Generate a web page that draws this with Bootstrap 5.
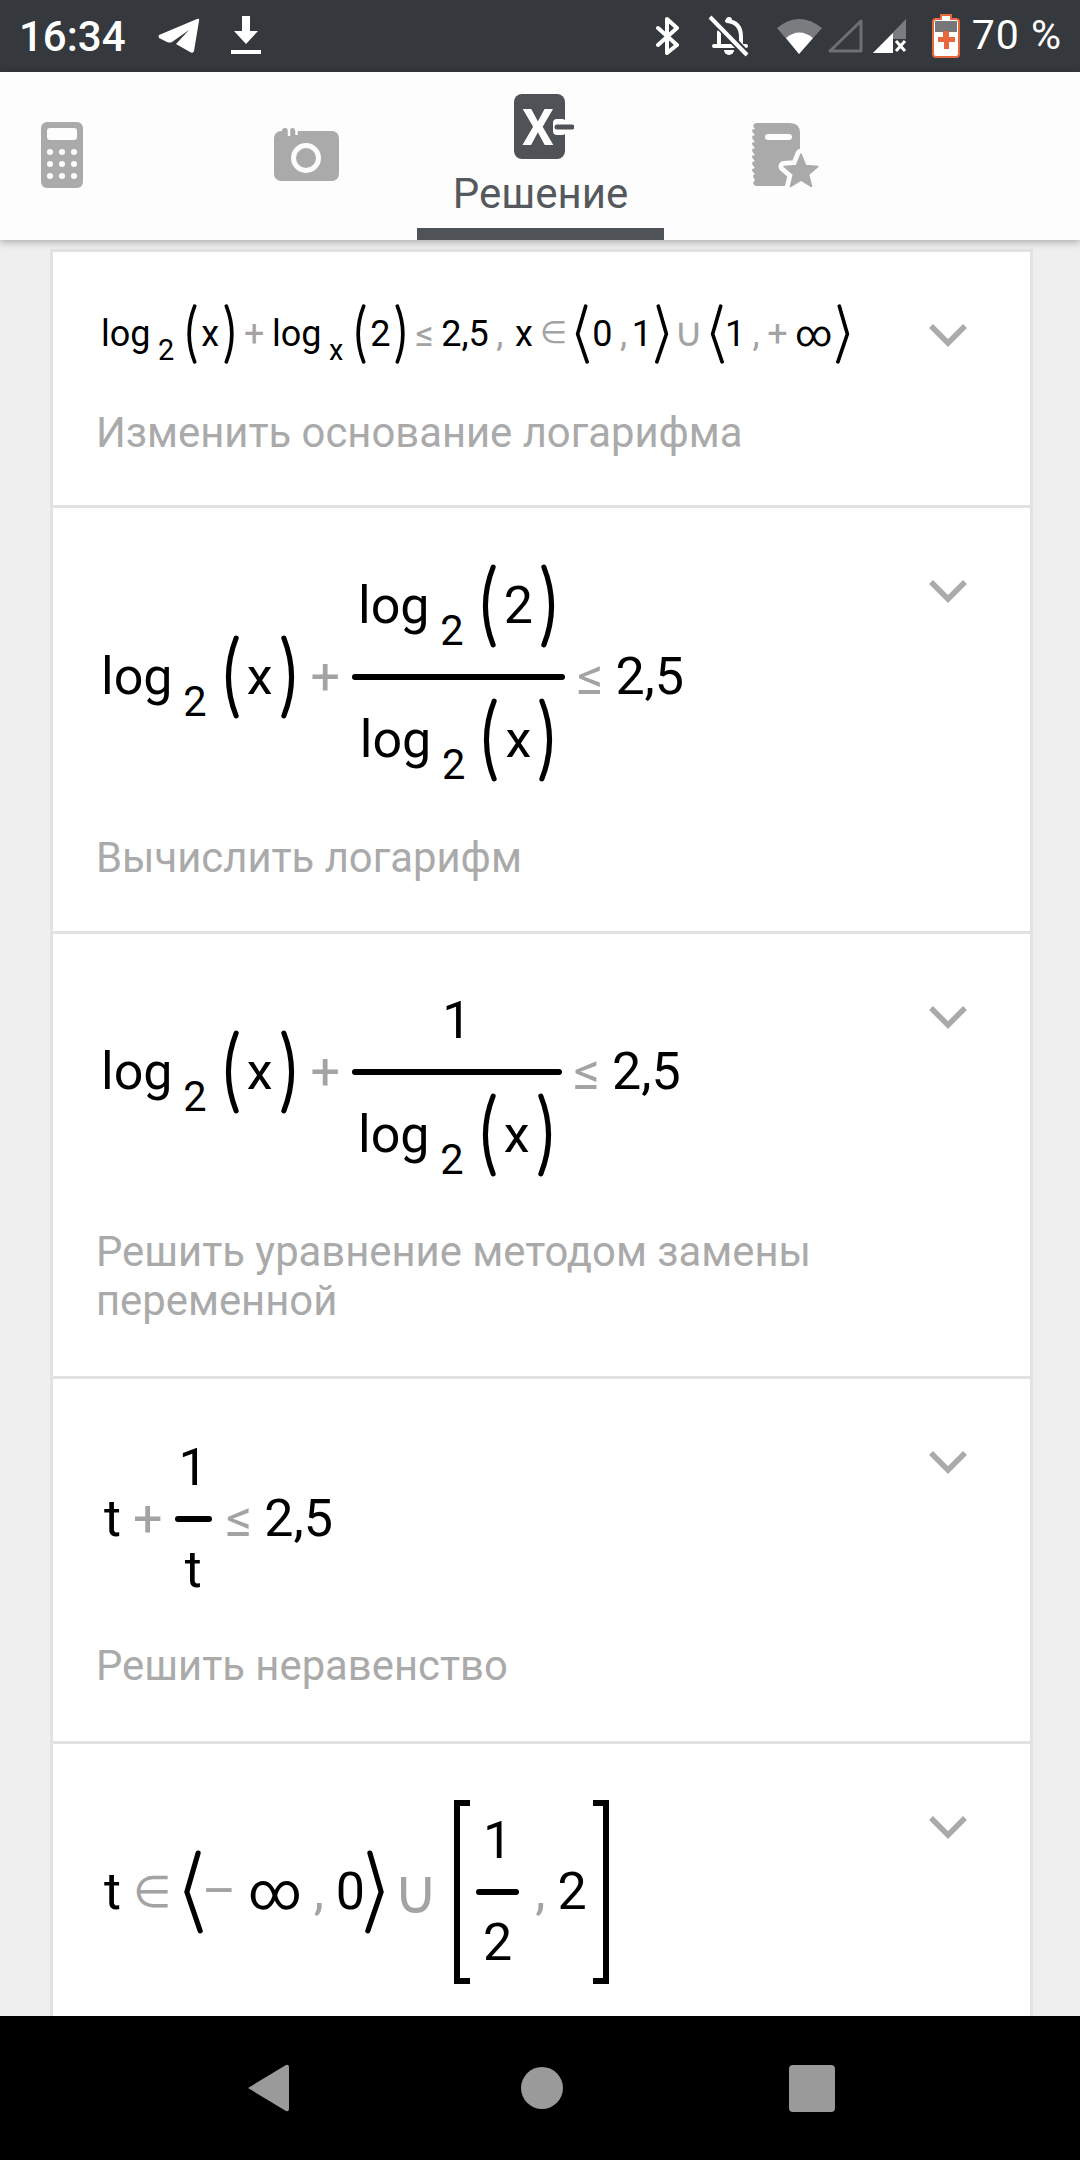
<!DOCTYPE html>
<html lang="ru">
<head>
    <meta charset="UTF-8">
    <title>Решение</title>
    <link href="https://cdn.jsdelivr.net/npm/bootstrap@5.3.0/dist/css/bootstrap.min.css" rel="stylesheet">
    <style>
        body {
            width: 1080px;
            height: 2160px;
            overflow: hidden;
            background-color: #efefef;
            font-family: Roboto, "Liberation Sans", sans-serif;
        }

        .status-bar {
            height: 72px;
            background-color: #35383c;
            color: #fff;
        }

        .status-time {
            font-size: 42px;
            font-weight: 500;
            margin-left: 19px;
            width: 139px;
        }

        .status-pct {
            font-size: 41px;
            margin-left: 12px;
            margin-right: 18px;
            letter-spacing: 1px;
        }

        .si-dl { margin-left: 31px; margin-right: auto; }
        .si-bell { margin-left: 27px; }
        .si-wifi { margin-left: 22px; }
        .si-sig1 { margin-left: 4px; }
        .si-sig2 { margin-left: 8px; }
        .si-batt { margin-left: 24px; }

        .tab-bar {
            height: 168px;
            background-color: #fdfdfd;
            box-shadow: 0 2px 8px rgba(0, 0, 0, .3);
            z-index: 2;
        }

        .tab-calc { margin: 50px 0 0 41px; }
        .tab-cam { margin: 56px 0 0 191px; }
        .tab-note { margin: 50px 0 0 86px; }

        .tab-active {
            width: 247px;
            margin-left: 78px;
            height: 168px;
            border-bottom: 12px solid #4f5257;
            color: #55585c;
            font-size: 42px;
            line-height: 46px;
            padding-top: 22px;
        }

        .tab-active svg {
            margin-left: 7px;
            margin-bottom: 11px;
        }

        .sheet-wrap {
            min-height: 0;
            padding: 9px 47px 0 50px;
        }

        .sheet {
            background-color: #fff;
            border-left: 3px solid #e2e2e2;
            border-right: 3px solid #e2e2e2;
        }

        .step {
            border-top: 3px solid #e2e2e2;
            padding-left: 43px;
            padding-right: 44px;
        }

        .step-chevron {
            top: 71px;
            right: 62px;
        }

        .step-note {
            font-size: 41.8px;
            line-height: 49px;
            color: #aaa;
            margin: 0;
        }

        .eq {
            display: flex;
            align-items: center;
            color: #000;
            white-space: nowrap;
            font-size: 52px;
            line-height: 1;
            gap: 12px;
            margin-left: 5px;
        }

        .eq-sm {
            font-size: 36px;
            gap: 7.5px;
        }

        .low {
            font-size: .8em;
            margin-left: .26em;
            margin-right: 2px;
            vertical-align: -.52em;
            line-height: 0;
        }

        .op {
            color: #a3a3a3;
        }

        .op-wide {
            font-size: 1.2em;
            margin-left: -4px;
            margin-right: 4px;
        }

        .eq-sm .op-wide {
            font-size: 1.12em;
            margin-left: -3px;
            margin-right: 0;
        }

        .op-in {
            font-size: .85em;
        }

        .tight {
            margin-left: -6px;
            margin-right: -6px;
        }

        .eq-sm .tight {
            margin-left: -4px;
            margin-right: -4px;
        }

        .tight-l {
            margin-left: -4px;
        }

        .tight-r {
            margin-right: -4px;
        }

        .pull-l {
            margin-left: -7px;
        }

        .pull-r {
            margin-right: -3px;
        }

        .snug-l {
            margin-left: -13px;
        }

        .snug-r {
            margin-right: -12px;
        }

        .snug-brk {
            margin-right: -7px;
        }

        .frac {
            display: grid;
            grid-template-rows: 1fr auto 1fr;
            justify-items: center;
            align-items: center;
        }

        .frac-bar {
            width: 100%;
            height: 6px;
            border-radius: 3px;
            background-color: #000;
        }

        .frac-part {
            display: flex;
            align-items: center;
            gap: 12px;
            padding: 22px 6px;
        }

        .frac-top {
            padding-bottom: 26px;
        }

        .frac-low {
            padding-top: 18px;
            padding-bottom: 30px;
        }

        .frac-one {
            align-self: end;
            padding-bottom: 22px;
        }

        .frac-narrow {
            margin-right: 2px;
        }

        .frac-narrow .frac-part {
            padding-left: 4px;
            padding-right: 4px;
        }

        .frac-wide {
            margin-left: -7px;
            margin-right: 4px;
        }

        .frac-wide .frac-part {
            padding-left: 7px;
            padding-right: 7px;
        }

        .par-lg {
            width: 20px;
            height: 84px;
        }

        .par-sm {
            width: 14px;
            height: 60px;
        }

        .brk {
            width: 17px;
            height: 184px;
        }

        .r1 { padding-top: 49px; padding-bottom: 48px; }
        .r1 .eq { height: 65px; margin-bottom: 42px; }
        .r2 { padding-top: 61px; padding-bottom: 49px; }
        .r2 .eq { height: 216px; margin-bottom: 48px; }
        .r3 { padding-top: 32px; padding-bottom: 51px; }
        .r3 .eq { height: 212px; margin-bottom: 49px; }
        .r4 { padding-top: 48px; padding-bottom: 51px; }
        .r4 .eq { height: 184px; margin-bottom: 30px; margin-left: 8px; }
        .r5 { padding-top: 55px; padding-bottom: 60px; }
        .r5 .eq { height: 186px; margin-left: 8px; }

        .nav-keys {
            height: 144px;
            background-color: #000;
            z-index: 2;
        }

        .key-home { margin-left: 231px; }
        .key-apps { margin-left: 226px; }
    </style>
</head>
<body>

<svg width="0" height="0" class="position-absolute">
    <symbol id="pl" viewBox="0 0 18 82"><path d="M14 3Q-1 41 14 79" fill="none" stroke="#000" stroke-width="5" stroke-linecap="round"/></symbol>
    <symbol id="pr" viewBox="0 0 18 82"><path d="M4 3Q19 41 4 79" fill="none" stroke="#000" stroke-width="5" stroke-linecap="round"/></symbol>
    <symbol id="al" viewBox="0 0 18 82"><path d="M14 3L3 41L16 79" fill="none" stroke="#000" stroke-width="5" stroke-linecap="round" stroke-linejoin="round"/></symbol>
    <symbol id="ar" viewBox="0 0 18 82"><path d="M4 3L15 41L2 79" fill="none" stroke="#000" stroke-width="5" stroke-linecap="round" stroke-linejoin="round"/></symbol>
    <symbol id="chev" viewBox="0 0 40 24"><path d="M3 3L20 20L37 3" fill="none" stroke="#aaa" stroke-width="5.5"/></symbol>
</svg>

<div class="d-flex flex-column vh-100">

    <!-- Status bar -->
    <div class="status-bar d-flex align-items-center flex-shrink-0">
        <span class="status-time">16:34</span>
        <svg width="42" height="36" viewBox="0 0 42 36"><path d="M1 17L39 1Q42 0 41 3L36 33Q35 36 32 34L18 26L31 12L14 24Q12 25 9 24L1 20Q0 18 1 17Z" fill="#fff"/></svg>
        <svg class="si-dl" width="30" height="40" viewBox="0 0 30 40"><path d="M11 0h8v15h8L15 28 3 15h8z" fill="#fff"/><path d="M0 34h30v4H0z" fill="#fff"/></svg>
        <svg width="26" height="38" viewBox="0 0 26 38"><path d="M3 11L22 28L12 36V2L22 11L3 28" fill="none" stroke="#fff" stroke-width="4" stroke-linejoin="round" stroke-linecap="round"/></svg>
        <svg class="si-bell" width="42" height="42" viewBox="0 0 42 42"><circle cx="21" cy="5" r="3" fill="#fff"/><path d="M19 6Q33 7 33 22V31M11 17V31M6 31H38" fill="none" stroke="#fff" stroke-width="4" stroke-linecap="round"/><path d="M16 35a5 5 0 0 0 10 0z" fill="#fff"/><path d="M3 2l36 38" stroke="#35383c" stroke-width="8"/><path d="M2 2l37 38" stroke="#fff" stroke-width="4"/></svg>
        <svg class="si-wifi" width="52" height="38" viewBox="0 0 52 38"><path d="M5 11Q27-7 50 11L27 37z" fill="#7a7c7f"/><path d="M14 21Q27 10 41 21L27 37z" fill="#fff"/></svg>
        <svg class="si-sig1" width="36" height="36" viewBox="0 0 36 36"><path d="M2 33L33 3V33z" fill="none" stroke="#6d6f72" stroke-width="3" stroke-linejoin="round"/></svg>
        <svg class="si-sig2" width="36" height="36" viewBox="0 0 36 36"><path d="M34 1V21H21V35H1z" fill="#7a7c7f"/><path d="M1 35L21 15V35z" fill="#fff"/><path d="M24 23l9 10M33 23l-9 10" stroke="#fff" stroke-width="3"/></svg>
        <svg class="si-batt" width="28" height="44" viewBox="0 0 28 44"><path d="M9 1h10v4h5q3 0 3 3v32q0 3-3 3H4q-3 0-3-3V8q0-3 3-3h5z" fill="#fff" stroke="#e8683e" stroke-width="2"/><path d="M3 7h22v11H3z" fill="#75777a"/><path d="M11 17h6v6h6v5h-6v7h-5v-7H6v-5h5z" fill="#e8683e"/></svg>
        <span class="status-pct">70 %</span>
    </div>

    <!-- Tabs -->
    <div class="tab-bar d-flex align-items-start flex-shrink-0 position-relative">
        <svg class="tab-calc" width="42" height="66" viewBox="0 0 42 66"><rect width="42" height="66" rx="6" fill="#aaa"/><rect x="6" y="6" width="30" height="12" rx="3" fill="#fdfdfd"/><g fill="#fdfdfd"><circle cx="9" cy="30" r="3"/><circle cx="21" cy="30" r="3"/><circle cx="33" cy="30" r="3"/><circle cx="9" cy="42" r="3"/><circle cx="21" cy="42" r="3"/><circle cx="33" cy="42" r="3"/><circle cx="9" cy="54" r="3"/><circle cx="21" cy="54" r="3"/><circle cx="33" cy="54" r="3"/></g></svg>
        <svg class="tab-cam" width="65" height="54" viewBox="0 0 65 54"><rect y="3" width="65" height="50" rx="7" fill="#aaa"/><rect x="8" width="6" height="8" rx="3" fill="#aaa"/><rect x="16" width="5" height="8" rx="2.500" fill="#aaa"/><path d="M15 0v8M22.500 0v7" stroke="#fdfdfd" stroke-width="2.500"/><circle cx="32" cy="30" r="12.500" fill="none" stroke="#fdfdfd" stroke-width="5"/></svg>
        <div class="tab-active d-flex flex-column align-items-center">
            <svg width="60" height="66" viewBox="0 0 60 66" class="flex-shrink-0"><rect width="51" height="65" rx="8" fill="#4f5257"/><text x="8" y="51" font-family="Roboto" font-weight="700" font-size="50" fill="#fff">X</text><rect x="39" y="25" width="13" height="16" rx="4" fill="#fff"/><path d="M43 33h15" stroke="#4f5257" stroke-width="5" stroke-linecap="round"/></svg>
            <span>Решение</span>
        </div>
        <svg class="tab-note" width="70" height="66" viewBox="0 0 70 66"><path d="M6 1H40Q50 1 50 11V64H6Q1 62 5 58Q1 53 5 52Q-1 47 5 46Q-1 40 5 39Q-1 33 5 33Q-1 27 5 26Q-1 20 5 20Q-1 14 5 13Q-1 7 5 7Q1 3 6 1Z" fill="#aaa"/><rect x="15" y="12" width="27" height="6" rx="3" fill="#fdfdfd"/><path d="M51 32l4.700 11.500 12.300.900-9.400 8.100 3 12.100-10.600-6.600-10.600 6.600 3-12.100-9.400-8.100 12.300-.900z" fill="#fdfdfd" stroke="#fdfdfd" stroke-width="11" stroke-linejoin="round"/><path d="M51 32l4.700 11.500 12.300.900-9.400 8.100 3 12.100-10.600-6.600-10.600 6.600 3-12.100-9.400-8.100 12.300-.900z" fill="#aaa" stroke="#aaa" stroke-width="1.500" stroke-linejoin="round"/></svg>
    </div>

    <!-- Steps -->
    <div class="sheet-wrap flex-grow-1 overflow-hidden">
        <div class="sheet">

            <div class="step r1 position-relative">
                <div class="eq eq-sm">
                    <span>log<span class="low">2</span></span>
                    <svg class="par-sm"><use href="#pl"/></svg><span class="tight">x</span><svg class="par-sm"><use href="#pr"/></svg>
                    <span class="op">+</span>
                    <span>log<span class="low">x</span></span>
                    <svg class="par-sm"><use href="#pl"/></svg><span class="tight">2</span><svg class="par-sm"><use href="#pr"/></svg>
                    <span class="op">≤</span><span>2,5</span><span class="op me-1">,</span><span>x</span><span class="op op-in">∈</span>
                    <svg class="par-sm"><use href="#al"/></svg><span class="tight-l">0</span><span class="op pull-r">,</span><span class="tight-r">1</span><svg class="par-sm"><use href="#ar"/></svg>
                    <span class="op op-wide">∪</span>
                    <svg class="par-sm"><use href="#al"/></svg><span class="pull-l">1</span><span class="op">,</span><span class="op">+</span><span class="tight-r">∞</span><svg class="par-sm"><use href="#ar"/></svg>
                </div>
                <svg class="step-chevron position-absolute" width="40" height="24"><use href="#chev"/></svg>
                <p class="step-note">Изменить основание логарифма</p>
            </div>

            <div class="step r2 position-relative">
                <div class="eq">
                    <span>log<span class="low">2</span></span>
                    <svg class="par-lg"><use href="#pl"/></svg><span class="tight">x</span><svg class="par-lg"><use href="#pr"/></svg>
                    <span class="op">+</span>
                    <div class="frac">
                        <div class="frac-part frac-top"><span>log<span class="low">2</span></span><svg class="par-lg"><use href="#pl"/></svg><span class="tight">2</span><svg class="par-lg"><use href="#pr"/></svg></div>
                        <div class="frac-bar"></div>
                        <div class="frac-part frac-low"><span>log<span class="low">2</span></span><svg class="par-lg"><use href="#pl"/></svg><span class="tight">x</span><svg class="par-lg"><use href="#pr"/></svg></div>
                    </div>
                    <span class="op">≤</span><span>2,5</span>
                </div>
                <svg class="step-chevron position-absolute" width="40" height="24"><use href="#chev"/></svg>
                <p class="step-note">Вычислить логарифм</p>
            </div>

            <div class="step r3 position-relative">
                <div class="eq">
                    <span>log<span class="low">2</span></span>
                    <svg class="par-lg"><use href="#pl"/></svg><span class="tight">x</span><svg class="par-lg"><use href="#pr"/></svg>
                    <span class="op">+</span>
                    <div class="frac">
                        <div class="frac-part frac-one"><span>1</span></div>
                        <div class="frac-bar"></div>
                        <div class="frac-part frac-low"><span>log<span class="low">2</span></span><svg class="par-lg"><use href="#pl"/></svg><span class="tight">x</span><svg class="par-lg"><use href="#pr"/></svg></div>
                    </div>
                    <span class="op">≤</span><span>2,5</span>
                </div>
                <svg class="step-chevron position-absolute" width="40" height="24"><use href="#chev"/></svg>
                <p class="step-note">Решить уравнение методом замены<br>переменной</p>
            </div>

            <div class="step r4 position-relative">
                <div class="eq">
                    <span>t</span><span class="op">+</span>
                    <div class="frac frac-narrow">
                        <div class="frac-part"><span>1</span></div>
                        <div class="frac-bar"></div>
                        <div class="frac-part"><span>t</span></div>
                    </div>
                    <span class="op">≤</span><span>2,5</span>
                </div>
                <svg class="step-chevron position-absolute" width="40" height="24"><use href="#chev"/></svg>
                <p class="step-note">Решить неравенство</p>
            </div>

            <div class="step r5 position-relative">
                <div class="eq">
                    <span>t</span><span class="op op-in">∈</span>
                    <svg class="par-lg"><use href="#al"/></svg><span class="op snug-l">–</span><span>∞</span><span class="op">,</span><span class="snug-r">0</span><svg class="par-lg"><use href="#ar"/></svg>
                    <span class="op op-wide">∪</span>
                    <svg class="brk" viewBox="0 0 17 184"><path d="M16 3H3V181H16" fill="none" stroke="#000" stroke-width="6"/></svg>
                    <div class="frac frac-wide">
                        <div class="frac-part"><span>1</span></div>
                        <div class="frac-bar"></div>
                        <div class="frac-part"><span>2</span></div>
                    </div>
                    <span class="op">,</span><span class="snug-brk">2</span>
                    <svg class="brk" viewBox="0 0 17 184"><path d="M1 3H14V181H1" fill="none" stroke="#000" stroke-width="6"/></svg>
                </div>
                <svg class="step-chevron position-absolute" width="40" height="24"><use href="#chev"/></svg>
            </div>

        </div>
    </div>

    <!-- Navigation keys -->
    <div class="nav-keys d-flex justify-content-center align-items-center flex-shrink-0">
        <svg width="44" height="48" viewBox="0 0 44 48"><path d="M2 24L40 1Q43 0 43 3V45Q43 48 40 47z" fill="#9a9a9a"/></svg>
        <svg class="key-home" width="42" height="42" viewBox="0 0 42 42"><circle cx="21" cy="21" r="21" fill="#9a9a9a"/></svg>
        <svg class="key-apps" width="46" height="47" viewBox="0 0 46 47"><rect width="46" height="47" rx="4" fill="#9a9a9a"/></svg>
    </div>
</div>

</body>
</html>
